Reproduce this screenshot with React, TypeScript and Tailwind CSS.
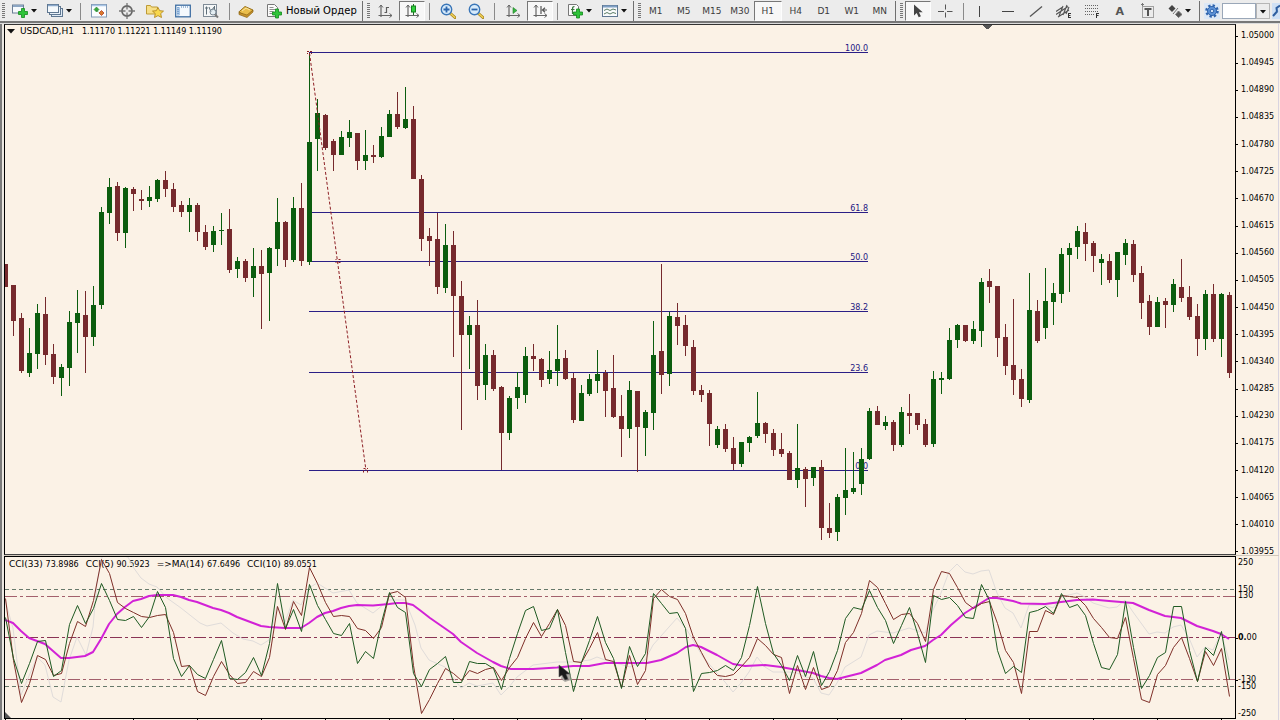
import React from "react";

type Candle = [number, number, number, number, "g" | "r"];

const STEP = 8;
const X0 = 5;

// high, body top, body bottom, low, direction
const candles: Candle[] = [
  [264, 264, 287, 287, "r"], [285, 285, 321, 336, "r"], [313, 318, 371, 373, "r"], [328, 353, 373, 377, "g"],
  [304, 313, 354, 369, "g"], [297, 314, 355, 365, "r"], [344, 354, 377, 384, "r"], [364, 367, 378, 396, "g"],
  [311, 322, 368, 386, "g"], [290, 313, 323, 353, "g"], [291, 315, 337, 373, "r"], [286, 305, 337, 346, "g"],
  [207, 212, 305, 309, "g"], [178, 187, 213, 224, "g"], [182, 186, 233, 241, "r"], [187, 188, 233, 248, "g"],
  [187, 189, 194, 211, "r"], [190, 199, 201, 210, "r"], [186, 197, 201, 207, "g"], [179, 180, 199, 202, "g"],
  [171, 180, 189, 197, "r"], [183, 189, 207, 212, "r"], [201, 205, 212, 217, "r"], [198, 205, 212, 232, "g"],
  [203, 205, 232, 241, "r"], [225, 232, 247, 250, "r"], [226, 231, 245, 252, "g"], [213, 230, 231, 245, "g"],
  [209, 229, 270, 273, "r"], [257, 261, 269, 278, "g"], [259, 261, 278, 282, "r"], [248, 266, 278, 297, "g"],
  [250, 266, 274, 329, "r"], [247, 248, 273, 321, "g"], [198, 222, 249, 266, "g"], [221, 222, 260, 267, "r"],
  [197, 208, 260, 262, "g"], [183, 208, 261, 266, "r"], [53, 142, 262, 265, "g"], [99, 113, 139, 171, "g"],
  [114, 115, 148, 150, "r"], [139, 141, 155, 171, "r"], [131, 137, 155, 155, "g"], [120, 132, 138, 147, "g"],
  [133, 133, 161, 170, "r"], [130, 155, 161, 170, "g"], [145, 155, 157, 163, "r"], [127, 136, 157, 158, "g"],
  [110, 114, 137, 137, "g"], [92, 114, 127, 129, "r"], [87, 119, 128, 129, "g"], [106, 119, 179, 179, "r"],
  [175, 179, 239, 251, "r"], [228, 236, 241, 266, "r"], [213, 239, 287, 294, "r"], [224, 245, 288, 293, "g"],
  [231, 245, 296, 357, "r"], [281, 296, 335, 430, "r"], [316, 325, 335, 369, "g"], [300, 325, 386, 400, "r"],
  [344, 355, 385, 400, "g"], [350, 355, 389, 391, "r"], [386, 387, 433, 470, "r"], [396, 398, 433, 440, "g"],
  [372, 387, 398, 409, "g"], [347, 356, 395, 403, "g"], [344, 356, 359, 371, "r"], [358, 359, 380, 387, "r"],
  [351, 370, 379, 384, "g"], [325, 359, 371, 386, "g"], [350, 358, 379, 380, "r"], [373, 378, 420, 423, "r"],
  [385, 393, 421, 421, "g"], [374, 379, 394, 396, "g"], [350, 374, 381, 393, "g"], [370, 373, 391, 417, "r"],
  [355, 388, 417, 418, "r"], [395, 416, 429, 457, "r"], [381, 390, 429, 438, "g"], [391, 391, 427, 472, "r"],
  [410, 412, 428, 456, "g"], [321, 355, 413, 430, "g"], [264, 351, 375, 394, "r"], [312, 316, 374, 386, "g"],
  [303, 317, 326, 345, "r"], [315, 325, 346, 356, "r"], [340, 347, 391, 395, "r"], [385, 390, 395, 402, "r"],
  [390, 393, 424, 446, "r"], [426, 429, 445, 448, "g"], [424, 429, 449, 452, "r"], [437, 448, 464, 470, "r"],
  [442, 442, 464, 467, "g"], [436, 437, 443, 452, "g"], [392, 423, 436, 438, "g"], [422, 423, 434, 443, "r"],
  [429, 433, 450, 456, "r"], [433, 449, 454, 457, "r"], [451, 453, 480, 480, "r"], [424, 468, 480, 488, "g"],
  [467, 469, 479, 507, "r"], [467, 467, 478, 486, "g"], [460, 467, 528, 540, "r"], [503, 528, 533, 538, "r"],
  [494, 497, 532, 541, "g"], [448, 490, 498, 515, "g"], [452, 488, 492, 494, "g"], [448, 459, 484, 495, "g"],
  [408, 411, 459, 460, "g"], [406, 411, 425, 425, "r"], [416, 422, 426, 430, "g"], [420, 422, 445, 451, "r"],
  [407, 412, 445, 447, "g"], [394, 413, 416, 434, "r"], [413, 413, 425, 430, "r"], [419, 424, 445, 447, "r"],
  [371, 379, 444, 447, "g"], [372, 378, 380, 394, "g"], [328, 340, 379, 380, "g"], [324, 325, 340, 348, "g"],
  [325, 325, 341, 342, "r"], [321, 329, 341, 344, "g"], [278, 282, 331, 347, "g"], [269, 281, 287, 303, "r"],
  [286, 286, 338, 357, "r"], [324, 337, 366, 375, "r"], [299, 365, 380, 395, "r"], [369, 379, 399, 407, "r"],
  [273, 310, 400, 403, "g"], [300, 311, 341, 343, "r"], [268, 301, 328, 339, "g"], [283, 293, 302, 325, "g"],
  [248, 254, 294, 303, "g"], [243, 248, 255, 292, "g"], [226, 231, 247, 259, "g"], [223, 232, 244, 261, "r"],
  [241, 243, 256, 272, "r"], [254, 259, 263, 285, "g"], [254, 261, 280, 283, "r"], [252, 252, 280, 297, "g"],
  [239, 243, 255, 265, "g"], [240, 244, 275, 282, "r"], [266, 273, 303, 319, "r"], [295, 301, 327, 335, "r"],
  [297, 302, 327, 327, "g"], [298, 301, 305, 328, "r"], [279, 284, 305, 312, "g"], [259, 287, 298, 302, "r"],
  [286, 297, 317, 320, "r"], [304, 316, 339, 356, "r"], [290, 294, 339, 350, "g"], [284, 294, 339, 342, "r"],
  [293, 294, 339, 357, "g"], [292, 295, 373, 378, "r"],
];

const cciFast = [
  617, 658, 683, 663, 641, 640, 676, 670, 624, 605, 623, 608, 583, 600, 619, 620, 616, 627, 616, 591, 607, 658, 676, 665, 674, 678,
  659, 640, 678, 679, 672, 657, 675, 643, 583, 628, 609, 631, 584, 605, 619, 633, 635, 623, 663, 651, 658, 622, 592, 607, 612, 673,
  686, 669, 663, 656, 682, 682, 661, 663, 663, 668, 689, 658, 633, 610, 606, 630, 628, 609, 652, 691, 662, 640, 616, 642, 658, 688,
  646, 666, 653, 593, 603, 613, 612, 628, 691, 673, 672, 670, 665, 670, 657, 625, 586, 623, 653, 665, 680, 655, 676, 651, 685, 671,
  650, 618, 607, 609, 590, 607, 620, 643, 625, 607, 633, 662, 595, 599, 597, 605, 617, 618, 584, 600, 650, 673, 666, 672, 612, 610,
  606, 613, 593, 607, 604, 615, 643, 667, 669, 654, 601, 647, 688, 675, 657, 652, 606, 606, 650, 681, 647, 655, 631, 679,
];

const cciMid = [
  598, 660, 702, 683, 655, 659, 675, 673, 643, 621, 626, 600, 559, 573, 602, 608, 612, 616, 617, 615, 614, 632, 666, 665, 691, 695,
  676, 661, 674, 683, 682, 671, 676, 657, 606, 629, 601, 615, 567, 583, 602, 616, 615, 616, 628, 630, 638, 627, 593, 591, 597, 665,
  713, 699, 683, 668, 673, 680, 670, 673, 669, 667, 680, 667, 657, 638, 622, 636, 623, 609, 625, 661, 662, 648, 632, 659, 661, 687,
  655, 684, 670, 598, 589, 596, 599, 613, 637, 652, 667, 675, 676, 674, 666, 657, 638, 645, 654, 657, 693, 665, 689, 667, 689, 686,
  670, 642, 632, 613, 580, 587, 603, 619, 614, 613, 623, 641, 589, 571, 573, 587, 602, 608, 603, 601, 623, 650, 662, 693, 631, 631,
  610, 614, 595, 596, 597, 605, 618, 627, 637, 638, 617, 658, 699, 702, 674, 665, 647, 637, 658, 681, 651, 665, 648, 696,
];

const maPoints =
  "5,620 13,623 21,631 29,638 37,641 45,644 53,651 61,658 69,658 77,657 85,656 93,652 101,639 109,624 117,614 125,607 133,601 141,599 149,596 157,595 173,595 181,597 189,600 197,602 205,605 213,608 221,610 229,613 237,617 245,620 253,623 261,626 269,627 285,628 301,628 309,623 317,617 325,613 333,611 341,608 349,606 357,605 373,605.5 389,604 397,603 405,603 413,605 421,611 430,618 453,634 461,642 477,653 493,662 501,666 511,669 533,669 557,667.5 573,666 589,666 605,663 621,663 647,663 661,660 677,653 686,647 693,645 701,647 717,655 733,664 745,666 765,665 781,667 797,670 813,673 821,676 829,678 837,679 845,677 861,673 877,665 885,660 901,655 911,650 925,646 933,640 941,635 951,625 965,613 981,603 989,598 997,598 1013,601 1021,603.5 1045,604 1061,602 1077,600 1093,599.5 1109,601 1133,603 1149,610 1165,616 1181,618 1197,626 1213,631 1221,634 1229,639";

const slowPoints =
  "5,600 13,628 21,695 37,657 45,665 53,697 61,702 69,660 77,637 86,655 93,627 97,583 103,552 128,557 133,567 141,578 149,584 157,587 167,598 181,608 200,623 207,626 221,623 233,633 243,639 253,641 261,645 269,640 277,606 285,622 293,600 301,605 309,588 317,583 325,588 333,593 349,590 357,603 373,613 389,600 405,600 415,625 421,648 429,660 445,667 461,688 469,683 477,686 493,683 501,695 509,687 517,677 533,665 557,662 573,662 590,660 597,657 605,660 630,667 645,660 653,645 661,636 677,618 687,630 703,657 717,673 725,682 733,692 741,683 749,672 757,657 765,667 773,672 789,672 797,673 805,677 813,678 821,693 829,695 837,683 845,667 861,657 869,635 877,631 893,633 909,628 925,633 933,610 941,593 949,572 957,564 965,572 973,574 981,571 989,570 997,593 1005,608 1013,613 1021,628 1029,605 1045,605 1053,608 1061,597 1077,593 1085,597 1093,603 1109,608 1117,607 1125,600 1133,612 1149,634 1157,632 1165,633 1173,627 1181,625 1189,638 1197,657 1205,647 1213,650 1221,633 1229,660";

const fibLevels = [
  { y: 52, label: "100.0" },
  { y: 212, label: "61.8" },
  { y: 261, label: "50.0" },
  { y: 311, label: "38.2" },
  { y: 372, label: "23.6" },
  { y: 470, label: "0.0" },
];

const prices = [
  "1.05000", "1.04945", "1.04890", "1.04835", "1.04780", "1.04725", "1.04670", "1.04615", "1.04560", "1.04505",
  "1.04450", "1.04395", "1.04340", "1.04285", "1.04230", "1.04175", "1.04120", "1.04065", "1.04010", "1.03955",
];

const cciAxis = [
  { y: 563, label: "250", tick: false },
  { y: 590, label: "150", tick: false },
  { y: 596, label: "130", tick: false },
  { y: 638, label: "0.00", tick: true },
  { y: 680, label: "-130", tick: true },
  { y: 687, label: "-150", tick: false },
  { y: 714, label: "-250", tick: false },
];

const toPoints = (ys: number[]) => ys.map((y, i) => `${X0 + i * STEP + 0.5},${y + 0.5}`).join(" ");

function Ico({ children, w = 16 }: { children: React.ReactNode; w?: number }) {
  return (
    <svg width={w} height="16" viewBox={`0 0 ${w} 16`} fill="none" className="shrink-0" aria-hidden="true">
      {children}
    </svg>
  );
}

function Tool({ label, className = "w-7", children, pressed }: { label: string; className?: string; children: React.ReactNode; pressed?: boolean }) {
  return (
    <button
      type="button"
      aria-label={label}
      aria-pressed={pressed}
      className={`flex h-5 shrink-0 items-center justify-center ${pressed ? "border border-t-[#777] border-r-[#fdfdfd] border-b-[#fdfdfd] border-l-[#777] bg-[#f7f7f7]" : ""} ${className}`}
    >
      {children}
    </button>
  );
}

const Caret = () => (
  <svg width="6" height="4" viewBox="0 0 6 4" className="ml-[3px] shrink-0" aria-hidden="true">
    <path d="M0 0h6L3 3.5z" fill="#111" />
  </svg>
);
const Sep = ({ className = "mx-1" }: { className?: string }) => <span className={`h-[17px] w-px shrink-0 bg-[#8a8a8a] ${className}`} />;
const Edge = () => <span className="mr-1 ml-px h-full w-px shrink-0 bg-[#6f6f6f]" />;
const Grip = () => (
  <svg width="4" height="16" viewBox="0 0 4 16" className="shrink-0" aria-hidden="true">
    {[0, 2, 4, 6, 8, 10, 12, 14].map((y) => (
      <rect key={y} y={y} width="3" height="1" fill="#777" />
    ))}
  </svg>
);
const Plus = ({ x, y }: { x: number; y: number }) => (
  <path transform={`translate(${x} ${y})`} d="M3 0h3v3h3v3H6v3H3V6H0V3h3z" fill="#2fc43a" stroke="#128a1c" strokeWidth=".8" />
);
const Axes = () => (
  <g stroke="#666" strokeWidth="1.2">
    <path d="M4 2v12M1.5 12.5H15" />
    <path d="M2 4.5l2-2.5 2 2.5M12.5 10.5l2.5 2-2.5 2" strokeWidth="1" />
  </g>
);
const Lens = ({ plus }: { plus?: boolean }) => (
  <Ico>
    <path d="M10.5 10.5l4.500 4" stroke="#a78419" strokeWidth="3" strokeLinecap="round" />
    <path d="M10.500 10.500l4.200 3.700" stroke="#f1d25a" strokeWidth="1.500" strokeLinecap="round" />
    <circle cx="6.500" cy="6.500" r="5.200" fill="#d7ebfb" stroke="#3a76b8" strokeWidth="1.400" />
    <path d={plus ? "M3.500 6.500h6M6.500 3.500v6" : "M3.500 6.500h6"} stroke="#2c66ad" strokeWidth="1.800" />
  </Ico>
);

function Toolbar() {
  return (
    <header className="flex h-[21px] shrink-0 items-center overflow-hidden bg-[#ececec] pt-px pl-[2px]">
      <Grip />
      <Tool label="New chart" className="w-9">
        <Ico>
          <rect x=".5" y="2" width="11" height="8" fill="#f6fafd" stroke="#6b7f96" />
          <path d="M1 3h10" stroke="#8ba5c2" strokeWidth="2" />
          <Plus x={6.5} y={5.500} />
        </Ico>
        <Caret />
      </Tool>
      <Tool label="Profiles" className="w-[34px]">
        <Ico>
          <rect x="4.500" y="5.500" width="11" height="8" fill="#dfeaf5" stroke="#5f7791" />
          <rect x="2.500" y="3.500" width="11" height="8" fill="#e8f0f8" stroke="#5f7791" />
          <rect x=".5" y="1.500" width="11" height="8" fill="#f5f9fc" stroke="#5f7791" />
          <path d="M1 2.500h10" stroke="#8ba9cc" strokeWidth="1.500" />
        </Ico>
        <Caret />
      </Tool>
      <Sep />
      <Tool label="Market watch">
        <Ico>
          <rect x=".5" y="1.500" width="15" height="12.500" fill="#fbfdff" stroke="#8199b5" />
          <path d="M1 2.500h14" stroke="#a9c6e6" strokeWidth="1.500" />
          <path d="M5.500 4l2.500 2.500L5.500 9 3 6.500zM5 7l2.500 2" fill="#37a83c" stroke="#2b8530" strokeWidth=".6" />
          <path d="M10.500 7.500L13 10l-2.500 2.500L8 10z" fill="#d9792c" stroke="#b3402a" strokeWidth=".8" />
        </Ico>
      </Tool>
      <Tool label="Data window">
        <Ico>
          <circle cx="8" cy="8" r="5" stroke="#666" strokeWidth="1.800" />
          <path d="M8 0v6.500M8 9.500V16M0 8h6.500M9.500 8H16" stroke="#777" strokeWidth="1.300" />
        </Ico>
      </Tool>
      <Tool label="Navigator">
        <Ico w={18}>
          <path d="M.5 2.500h4l1 1.500h6v7H.5z" fill="#f7df87" stroke="#bd9a35" />
          <path d="M12 4.500l1.700 3.200 3.800.4-2.800 2.500.8 3.900-3.500-1.900-3.500 1.900.8-3.900-2.800-2.500 3.800-.4z" fill="#f8d84e" stroke="#b48a20" strokeWidth=".9" />
        </Ico>
      </Tool>
      <Tool label="Terminal">
        <Ico>
          <rect x=".7" y="2.200" width="14.600" height="11.600" fill="#f4f9fd" stroke="#3f6fa3" strokeWidth="1.300" />
          <path d="M2 4.200h3v8H2z" fill="#aac8e8" />
          <path d="M3 4v8.500M6 4h8" stroke="#4f7fb4" strokeDasharray="1 1" />
        </Ico>
      </Tool>
      <Tool label="Strategy tester">
        <Ico>
          <rect x=".5" y="1.500" width="13" height="12" fill="#f5f7f8" stroke="#7f8b96" />
          <path d="M3.500 3.500v8M2 5h3M6 4l2 5 3-5M11.500 3v5" stroke="#5e6e78" />
          <circle cx="10" cy="9" r="3" fill="#dde9f1" fillOpacity=".7" stroke="#798792" />
          <path d="M12 11.500l3 3" stroke="#777" strokeWidth="2" />
        </Ico>
      </Tool>
      <Sep />
      <Tool label="Meta editor" className="w-6">
        <Ico>
          <path d="M.8 9L7 3.500l8 3.500-6 6.500z" fill="#e9bd4b" stroke="#987019" />
          <path d="M1 9.500l8 2.500 6-5v2L9 14.500 1 11.500z" fill="#c7922c" stroke="#8c6516" strokeWidth=".7" />
          <path d="M4 8l4-3 4 2" stroke="#fbe7a1" />
        </Ico>
      </Tool>
      <button type="button" className="flex h-5 shrink-0 items-center gap-1 pr-1 pl-2 text-[10px] leading-none whitespace-nowrap text-black">
        <Ico>
          <path d="M1.500 1.500h7l3 3v9h-10z" fill="#fbfbfb" stroke="#777" />
          <path d="M3.500 4.500h4M3.500 6.500h6M3.500 8.500h4M3.500 10.500h3" stroke="#8f8f8f" />
          <Plus x={6.500} y={6} />
        </Ico>
        Новый Ордер
      </button>
      <Edge />
      <Grip />
      <Tool label="Bar chart">
        <Ico>
          <Axes />
          <path d="M9.500 4v6M9.500 4.500H12M7.500 9.500h2" stroke="#5c5c5c" strokeWidth="1.200" />
        </Ico>
      </Tool>
      <Tool label="Candlesticks" className="w-[26px]" pressed>
        <Ico>
          <Axes />
          <path d="M9.500 1v11" stroke="#1c6e22" />
          <rect x="7.500" y="3" width="4" height="6" fill="#31d13e" stroke="#15801d" />
        </Ico>
      </Tool>
      <Sep />
      <Tool label="Zoom in"><Lens plus /></Tool>
      <Tool label="Zoom out"><Lens /></Tool>
      <Sep />
      <Tool label="Auto scroll">
        <Ico>
          <Axes />
          <path d="M8 4.500l4 3-4 3z" fill="#35b540" stroke="#218029" strokeWidth=".6" />
        </Ico>
      </Tool>
      <Tool label="Chart shift" className="w-[26px]" pressed>
        <Ico>
          <Axes />
          <path d="M9 3v8M15 7h-4M13 4.800L10.500 7 13 9.200" stroke="#555" strokeWidth="1.200" />
        </Ico>
      </Tool>
      <Sep />
      <Tool label="Indicators" className="w-9">
        <Ico>
          <path d="M1.500 1.500h8l2 2v9h-10z" fill="#fbfbfb" stroke="#777" />
          <path d="M7.500 3.500c-2 0-2 1-2 2.500v5M4 6.500h3.500" stroke="#3c7740" strokeWidth="1.200" />
          <Plus x={6.500} y={6} />
        </Ico>
        <Caret />
      </Tool>
      <Tool label="Templates" className="w-[34px]">
        <Ico>
          <rect x=".5" y="2.500" width="15" height="11" fill="#f9fbfc" stroke="#5f7791" />
          <path d="M1 3.500h14" stroke="#7e9fc4" strokeWidth="2" />
          <path d="M2 7.500l3-1.500 3 1.500L11 6l3 1M2 11l3-1.500L8 11l3-1.500 3 1" stroke="#5b7d66" />
        </Ico>
        <Caret />
      </Tool>
      <Edge />
      <Grip />
      {["M1", "M5", "M15", "M30", "H1", "H4", "D1", "W1", "MN"].map((p) => (
        <Tool key={p} label={p} pressed={p === "H1"}>
          <span className="text-[9px] leading-none text-[#3c3c3c]">{p}</span>
        </Tool>
      ))}
      <Edge />
      <Grip />
      <Tool label="Cursor" className="ml-px w-[26px]" pressed>
        <Ico>
          <path d="M4 1.500v11l2.700-2.400 2 4.200 2.200-1-2-4.100h3.800z" fill="#444" />
        </Ico>
      </Tool>
      <Tool label="Crosshair">
        <Ico>
          <path d="M8.500 1.500v5M8.500 9.500v5M1 8.500h6M10 8.500h5.500" stroke="#555" />
        </Ico>
      </Tool>
      <Sep className="mr-0.5 ml-1" />
      <Tool label="Vertical line"><Ico><path d="M7.500 3v11" stroke="#444" /></Ico></Tool>
      <Tool label="Horizontal line"><Ico><path d="M2 8.500h12" stroke="#444" /></Ico></Tool>
      <Tool label="Trend line"><Ico><path d="M2 13.500L14 3.500" stroke="#555" strokeWidth="1.300" /></Ico></Tool>
      <Tool label="Channel">
        <Ico>
          <path d="M0 11.500L12 3.500M2 14l11-7M3 13L7 3M7 12l4-10M0 8.500l6-4M10 11l3-7" stroke="#555" strokeWidth="1.100" />
          <path d="M12 10.500h3M12 12.500h2.500M12 14.500h3M12.500 10v5" stroke="#333" />
        </Ico>
      </Tool>
      <Tool label="Fibonacci retracement">
        <Ico>
          <path d="M1 2.500h14M1 5.500h14M1 8.500h14M1 11.500h9" stroke="#666" strokeDasharray="1 1" />
          <path d="M12 10.500h3M12 12.500h2.500M12.500 10v5" stroke="#333" />
        </Ico>
      </Tool>
      <Tool label="Text"><span className="text-[11px] leading-none font-bold text-[#555]">A</span></Tool>
      <Tool label="Text label">
        <Ico>
          <rect x="2.500" y="3.500" width="11" height="11" stroke="#555" strokeDasharray="1 1" />
          <path d="M4.500 6h7M8 6v7" stroke="#555" strokeWidth="2" />
          <path d="M1 1.500h3M2.500 0v3" stroke="#777" />
        </Ico>
      </Tool>
      <Tool label="Arrows" className="w-9">
        <Ico w={14}>
          <path d="M4 2l3.500 3.500L4 9 .5 5.500z" fill="#444" />
          <path d="M10.500 8l3.500 3.500-3.500 3L7.500 11.500zM5 11l5-6" fill="#555" stroke="#777" />
        </Ico>
        <Caret />
      </Tool>
      <Edge />
      <Tool label="Settings" className="w-4">
        <Ico>
          <rect width="16" height="16" fill="#dce8f6" />
          <circle cx="8" cy="8" r="5.500" stroke="#2f64ad" strokeWidth="2.500" strokeDasharray="2.300 2" />
          <circle cx="8" cy="8" r="4.500" fill="#5d93d8" stroke="#2f64ad" />
          <circle cx="8" cy="8" r="1.800" fill="#cfe0f4" stroke="#2f64ad" />
        </Ico>
      </Tool>
      <input aria-label="Template name" className="ml-0.5 h-4 min-w-0 flex-1 border border-[#9aa7b8] bg-white text-[9px]" />
      <button type="button" aria-label="Open list" className="flex h-4 w-3.5 shrink-0 items-end justify-center border border-[#b5b5b5] bg-[#ececec] pb-1">
        <svg width="6" height="4" viewBox="0 0 6 4" aria-hidden="true"><path d="M0 0h6L3 3.500z" fill="#111" /></svg>
      </button>
      <button type="button" aria-label="Tools" className="ml-0.5 h-4 w-2 shrink-0 bg-[#cfe0f4]">
        <svg width="8" height="16" viewBox="0 0 8 16" fill="none" aria-hidden="true">
          <path d="M1 13l4.500-5M5 8.500L4.500 5 8 2.500" stroke="#2f5fa0" strokeWidth="2" />
        </svg>
      </button>
    </header>
  );
}

function PriceChart() {
  return (
    <section aria-label="USDCAD price" className="flex min-h-0 flex-1">
      <div className="relative min-w-0 flex-1 border-t border-r border-b border-l border-t-[#333] border-r-black border-b-[#444] border-l-black">
        <h1 className="absolute top-0.5 left-0.5 flex items-center whitespace-pre text-[9px] leading-[9px]">
          <svg width="8" height="5" viewBox="0 0 8 5" className="mr-[5px]" aria-hidden="true"><path d="M0 0h8L4 4.500z" fill="#111" /></svg>
          USDCAD,H1
          <span className="ml-2 text-[8px]">1.11170 1.11221 1.11149 1.11190</span>
        </h1>
        {fibLevels.map((f) => (
          <span
            key={f.label}
            className="absolute -translate-x-full -translate-y-full text-[8px] leading-[8px] text-[#211583]"
            style={{ left: `${((868 - 5) / 1230) * 100}%`, top: `${((f.y - 24) / 529) * 100}%` }}
          >
            {f.label}
          </span>
        ))}
        <svg viewBox="5 25 1230 529" preserveAspectRatio="none" className="absolute inset-0 h-full w-full" shapeRendering="crispEdges" role="img" aria-label="Hourly candles with retracement levels">
          {fibLevels.map((f) => (
            <rect key={f.y} x="309" y={f.y} width="559" height="1" fill="#2b1f86" />
          ))}
          {candles.map(([h, t, b, l, d], i) => {
            const x = X0 + i * STEP;
            const fill = d === "g" ? "#0b5d0e" : "#762a2d";
            return (
              <g key={i} fill={fill}>
                <rect x={x} y={h} width="1" height={Math.max(1, l - h)} />
                <rect x={x - 2} y={t} width="5" height={Math.max(1, b - t)} />
              </g>
            );
          })}
          <g stroke="#8d1f24" fill="none" shapeRendering="auto">
            <path d="M309.500 53L337.500 261.500L366 470.500" strokeDasharray="3 2" />
            <path d="M307 51.500h2M310 51.500h2M307.500 54v-1M311.500 54v-1M335.500 259.500h1M338.500 259.500h2M335.500 262.500h1M338.500 262.500h2M363.500 468.500h2M367 468.500h1M363.500 472.500v-2M367.500 472.500v-2" />
          </g>
          <path d="M982 25h11l-5.500 4.500z" fill="#555" />
        </svg>
      </div>
      <ol className="-mb-px flex w-[43px] shrink-0 flex-col justify-between border-r border-[#d8d4e0] pt-2">
        {prices.map((p) => (
          <li key={p} className="flex h-2 items-center gap-[3px] text-[8px] leading-[8px]">
            <span className="h-px w-0.5 bg-black" />
            {p}
          </li>
        ))}
      </ol>
    </section>
  );
}

const Reading = ({ name, value }: { name: string; value: string }) => (
  <span className="whitespace-pre">
    {name} <span className="text-[8px]">{value}</span>
  </span>
);

function Indicator() {
  return (
    <section aria-label="CCI indicator" className="flex h-41 shrink-0">
      <div className="flex min-w-0 flex-1 flex-col">
        <div className="relative min-h-0 flex-1 border border-black">
          <h2 className="absolute top-[3px] left-1 flex items-baseline gap-[7px] text-[9px] leading-[9px]">
            <Reading name="CCI(33)" value="73.8986" />
            <Reading name="CCI(5)" value="90.5923" />
            <Reading name="=>MA(14)" value="67.6496" />
            <Reading name="CCI(10)" value="89.0551" />
          </h2>
          <svg viewBox="5 557 1230 161" preserveAspectRatio="none" className="absolute inset-0 h-full w-full" fill="none" role="img" aria-label="CCI curves">
            <g shapeRendering="crispEdges">
              <path d="M5 589.500H1235M5 686.500H1235" stroke="#66796a" strokeDasharray="4 3" />
              <path d="M5 596.500H1235M5 679.500H1235" stroke="#a3606c" strokeDasharray="12 3 3 3" />
              <path d="M5 637.500H1235" stroke="#8a3455" strokeDasharray="12 3 3 3" />
            </g>
            <polyline points={slowPoints} stroke="#e0dcda" />
            <polyline points={maPoints} stroke="#d222d6" strokeWidth="2" strokeLinejoin="round" />
            <polyline points={toPoints(cciMid)} stroke="#7f3029" />
            <polyline points={toPoints(cciFast)} stroke="#1f5a22" />
            <path d="M5 712l6 6H5z" fill="#555" />
            <path d="M563 668l8 7v5l-6 2-4-3z" fill="#8b8b88" opacity=".7" />
            <path d="M559 665v12l3-2 3 5 3-1-2-5h4z" fill="#1a1a1a" stroke="#555" strokeWidth=".6" />
          </svg>
        </div>
        <svg viewBox="4 719 1232 1" preserveAspectRatio="none" className="h-px w-full" shapeRendering="crispEdges" aria-hidden="true">
          {Array.from({ length: 20 }, (_, i) => (
            <rect key={i} x={5 + i * 64} y="719" width="1" height="1" fill="#000" />
          ))}
        </svg>
      </div>
      <ul className="relative w-[43px] shrink-0 border-r border-[#d8d4e0]">
        {cciAxis.map((a, i) => (
          <li
            key={i}
            className="absolute left-0 flex -translate-y-1/2 items-center text-[8px] leading-[8px]"
            style={{ top: `${((a.y - 556) / 164) * 100}%` }}
          >
            <span className={`h-px w-0.5 ${a.tick ? "bg-black" : ""}`} />
            <span className={a.label === "0.00" ? "first-letter:font-bold" : ""}>{a.label}</span>
          </li>
        ))}
      </ul>
    </section>
  );
}

export default function App() {
  return (
    <div className="flex h-screen flex-col overflow-hidden bg-[#fbf2e6] font-['DejaVu_Sans',sans-serif] text-black">
      <Toolbar />
      <div className="h-[3px] shrink-0 border-t-2 border-[#777] bg-[#dcdcdc]" />
      <main className="flex min-h-0 flex-1">
        <div className="w-1 shrink-0 border-l-2 border-[#7b7b7b] bg-[#ece8e2]" />
        <div className="flex min-w-0 flex-1 flex-col">
          <PriceChart />
          <div className="h-px shrink-0 bg-[#d0c8bc]" />
          <Indicator />
        </div>
        <div className="w-px shrink-0" />
      </main>
    </div>
  );
}
